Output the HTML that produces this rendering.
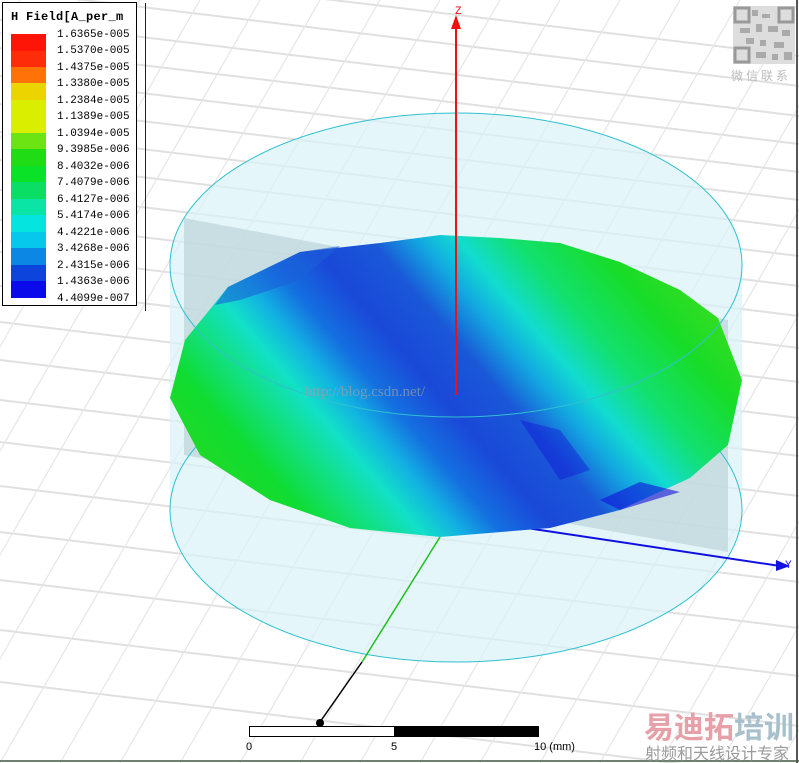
<!DOCTYPE html>
<html><head><meta charset="utf-8"><style>
html,body{margin:0;padding:0;background:#fff;}
body{width:799px;height:763px;overflow:hidden;position:relative;font-family:"Liberation Sans",sans-serif;}
svg{position:absolute;left:0;top:0;overflow:hidden;}
.leg{position:absolute;left:2px;top:2px;width:133px;height:302px;border:1px solid #000;background:#fff;font-family:"Liberation Mono",monospace;}
.leg .t{position:absolute;left:8px;top:7px;font-size:12px;font-weight:bold;letter-spacing:0.3px;}
.leg .r{position:absolute;left:8px;width:35px;height:17px;}
.leg .l{position:absolute;left:54px;font-size:11px;}
</style></head><body>
<svg width="799" height="763" viewBox="0 0 799 763">
<defs>
<linearGradient id="fg" gradientUnits="userSpaceOnUse" x1="230" y1="560" x2="690" y2="166">
<stop offset="0" stop-color="#2ed820"/>
<stop offset="0.14" stop-color="#10dc30"/>
<stop offset="0.21" stop-color="#12e080"/>
<stop offset="0.27" stop-color="#12e0c8"/>
<stop offset="0.32" stop-color="#12b0e2"/>
<stop offset="0.37" stop-color="#1470e0"/>
<stop offset="0.44" stop-color="#1a48d8"/>
<stop offset="0.52" stop-color="#1a58d8"/>
<stop offset="0.58" stop-color="#12a8e0"/>
<stop offset="0.63" stop-color="#12dcd0"/>
<stop offset="0.70" stop-color="#12e070"/>
<stop offset="0.80" stop-color="#18dc28"/>
<stop offset="1" stop-color="#5ee018"/>
</linearGradient>
</defs>
<g stroke="#e0e0e0" stroke-width="2" fill="none">
<line x1="0" y1="-40" x2="799" y2="56"/><line x1="0" y1="-10" x2="799" y2="86"/>
<line x1="0" y1="20" x2="799" y2="116"/><line x1="0" y1="48" x2="799" y2="144"/>
<line x1="0" y1="76" x2="799" y2="172"/><line x1="0" y1="104" x2="799" y2="200"/>
<line x1="0" y1="132" x2="799" y2="228"/><line x1="0" y1="160" x2="799" y2="256"/>
<line x1="0" y1="190" x2="799" y2="286"/><line x1="0" y1="220" x2="799" y2="316"/>
<line x1="0" y1="252" x2="799" y2="348"/><line x1="0" y1="286" x2="799" y2="382"/>
<line x1="0" y1="322" x2="799" y2="418"/><line x1="0" y1="360" x2="799" y2="456"/>
<line x1="0" y1="400" x2="799" y2="496"/><line x1="0" y1="442" x2="799" y2="538"/>
<line x1="0" y1="486" x2="799" y2="582"/><line x1="0" y1="532" x2="799" y2="628"/>
<line x1="0" y1="580" x2="799" y2="676"/><line x1="0" y1="630" x2="799" y2="726"/>
<line x1="0" y1="682" x2="799" y2="778"/>
</g>
<g stroke="#e6e6e6" stroke-width="1.2" fill="none">
<line x1="-100" y1="0" x2="-540" y2="763"/><line x1="-40" y1="0" x2="-480" y2="763"/>
<line x1="20" y1="0" x2="-420" y2="763"/><line x1="80" y1="0" x2="-360" y2="763"/>
<line x1="140" y1="0" x2="-300" y2="763"/><line x1="200" y1="0" x2="-240" y2="763"/>
<line x1="260" y1="0" x2="-180" y2="763"/><line x1="320" y1="0" x2="-120" y2="763"/>
<line x1="380" y1="0" x2="-60" y2="763"/><line x1="440" y1="0" x2="0" y2="763"/>
<line x1="500" y1="0" x2="60" y2="763"/><line x1="560" y1="0" x2="120" y2="763"/>
<line x1="620" y1="0" x2="180" y2="763"/><line x1="680" y1="0" x2="240" y2="763"/>
<line x1="740" y1="0" x2="300" y2="763"/><line x1="800" y1="0" x2="360" y2="763"/>
<line x1="860" y1="0" x2="420" y2="763"/><line x1="920" y1="0" x2="480" y2="763"/>
<line x1="980" y1="0" x2="540" y2="763"/><line x1="1040" y1="0" x2="600" y2="763"/>
<line x1="1100" y1="0" x2="660" y2="763"/><line x1="1160" y1="0" x2="720" y2="763"/>
<line x1="1220" y1="0" x2="780" y2="763"/><line x1="1280" y1="0" x2="840" y2="763"/>
</g>
<path d="M170 265 A286 152 0 0 1 742 265 L742 510 A286 152 0 0 1 170 510 Z" fill="#d8f2f6" fill-opacity="0.7"/>
<polygon points="184,218 728,320 728,552 184,455" fill="#b8cfd2" fill-opacity="0.6"/>
<ellipse cx="456" cy="510" rx="286" ry="152" fill="none" stroke="#30c0d0" stroke-width="1"/>
<line x1="520" y1="527" x2="780" y2="566" stroke="#1010e0" stroke-width="2"/>
<polygon points="790,566 776,560 776,571" fill="#1010e0"/>
<text x="785" y="568" font-size="11" fill="#1010e0" font-family="Liberation Mono,monospace">Y</text>
<line x1="440" y1="537" x2="362" y2="662" stroke="#20c020" stroke-width="1.5"/>
<line x1="362" y1="662" x2="320" y2="722" stroke="#000" stroke-width="1.5"/>
<circle cx="320" cy="723" r="4" fill="#000"/>
<polygon points="170,398 185,340 228,287 300,252 380,243 440,235 500,238 560,243 620,262 680,290 718,318 742,380 728,445 690,478 620,510 550,528 440,537 350,528 270,500 200,455" fill="url(#fg)"/>
<polygon points="228,287 300,252 340,246 300,280 240,300 215,305" fill="#1a60d8" fill-opacity="0.6"/>
<polygon points="600,500 640,482 680,492 620,510" fill="#1010d8" fill-opacity="0.6"/>
<polygon points="520,420 560,430 590,470 560,480" fill="#1010d8" fill-opacity="0.4"/>
<ellipse cx="456" cy="265" rx="286" ry="152" fill="none" stroke="#30c0d0" stroke-width="1"/>
<text x="305" y="396" font-size="15" fill="#9aa0a8" fill-opacity="0.7" font-family="Liberation Serif,serif">http://blog.csdn.net/</text>
<line x1="456" y1="26" x2="456" y2="395" stroke="#f01010" stroke-width="2"/>
<polygon points="456,15 451,29 461,29" fill="#f01010"/>
<text x="455" y="14" font-size="11" fill="#f01010" font-family="Liberation Mono,monospace">Z</text>
<rect x="249.5" y="726.5" width="145" height="10" fill="#fff" stroke="#000"/>
<rect x="394" y="726" width="145" height="11" fill="#000"/>
<g font-size="11" fill="#000" font-family="Liberation Sans,sans-serif">
<text x="246" y="750">0</text><text x="391" y="750">5</text><text x="534" y="750">10 (mm)</text>
</g>
<line x1="0" y1="761" x2="799" y2="761" stroke="#708070" stroke-width="2"/>
<line x1="797" y1="0" x2="797" y2="763" stroke="#555" stroke-width="2"/>
<line x1="145.5" y1="3" x2="145.5" y2="311" stroke="#222"/>
<g fill="#aaa">
<rect x="733" y="6" width="62" height="58" fill="#ddd"/>
<rect x="752" y="10" width="6" height="6"/><rect x="762" y="14" width="8" height="4"/><rect x="740" y="28" width="10" height="5"/>
<rect x="756" y="24" width="6" height="8"/><rect x="768" y="26" width="10" height="6"/><rect x="782" y="30" width="8" height="6"/>
<rect x="746" y="38" width="8" height="6"/><rect x="760" y="40" width="6" height="6"/><rect x="774" y="42" width="10" height="6"/>
<rect x="756" y="52" width="10" height="6"/><rect x="772" y="54" width="6" height="6"/><rect x="784" y="52" width="8" height="8"/>
<rect x="735" y="8" width="14" height="14" fill="none" stroke="#999" stroke-width="3"/>
<rect x="779" y="8" width="14" height="14" fill="none" stroke="#999" stroke-width="3"/>
<rect x="735" y="48" width="14" height="14" fill="none" stroke="#999" stroke-width="3"/></g>
<text x="731" y="80" font-size="12" fill="#bbb" font-family="Noto Sans CJK SC,sans-serif" letter-spacing="3">微信联系</text>
<text x="644" y="738" font-size="30" font-weight="bold" fill="#e8a0a8" font-family="Noto Sans CJK SC,sans-serif">易迪拓</text>
<text x="734" y="738" font-size="30" font-weight="bold" fill="#a8c0cc" font-family="Noto Sans CJK SC,sans-serif">培训</text>
<text x="645" y="759" font-size="16" fill="#9a9a9a" font-family="Noto Sans CJK SC,sans-serif">射频和天线设计专家</text>
</svg>
<div class="leg">
<div class="t">H Field[A_per_m</div>
<div class="r" style="top:31px;background:#ff1408"></div>
<div class="r" style="top:48px;background:#ff2c0a"></div>
<div class="r" style="top:64px;background:#ff7208"></div>
<div class="r" style="top:80px;background:#ecd400"></div>
<div class="r" style="top:97px;background:#daee00;height:34px"></div>
<div class="r" style="top:130px;background:#6ce414"></div>
<div class="r" style="top:146px;background:#20dc14"></div>
<div class="r" style="top:163px;background:#0ae228"></div>
<div class="r" style="top:179px;background:#0ade64"></div>
<div class="r" style="top:196px;background:#0ae4a4"></div>
<div class="r" style="top:212px;background:#06e4e0"></div>
<div class="r" style="top:229px;background:#06c8ec"></div>
<div class="r" style="top:245px;background:#0c88e4"></div>
<div class="r" style="top:262px;background:#0c44dc"></div>
<div class="r" style="top:278px;background:#0a0aea"></div>
<div class="l" style="top:26px">1.6365e-005</div>
<div class="l" style="top:42px">1.5370e-005</div>
<div class="l" style="top:59px">1.4375e-005</div>
<div class="l" style="top:75px">1.3380e-005</div>
<div class="l" style="top:92px">1.2384e-005</div>
<div class="l" style="top:108px">1.1389e-005</div>
<div class="l" style="top:125px">1.0394e-005</div>
<div class="l" style="top:141px">9.3985e-006</div>
<div class="l" style="top:158px">8.4032e-006</div>
<div class="l" style="top:174px">7.4079e-006</div>
<div class="l" style="top:191px">6.4127e-006</div>
<div class="l" style="top:207px">5.4174e-006</div>
<div class="l" style="top:224px">4.4221e-006</div>
<div class="l" style="top:240px">3.4268e-006</div>
<div class="l" style="top:257px">2.4315e-006</div>
<div class="l" style="top:273px">1.4363e-006</div>
<div class="l" style="top:290px">4.4099e-007</div>
</div>
</body></html>
